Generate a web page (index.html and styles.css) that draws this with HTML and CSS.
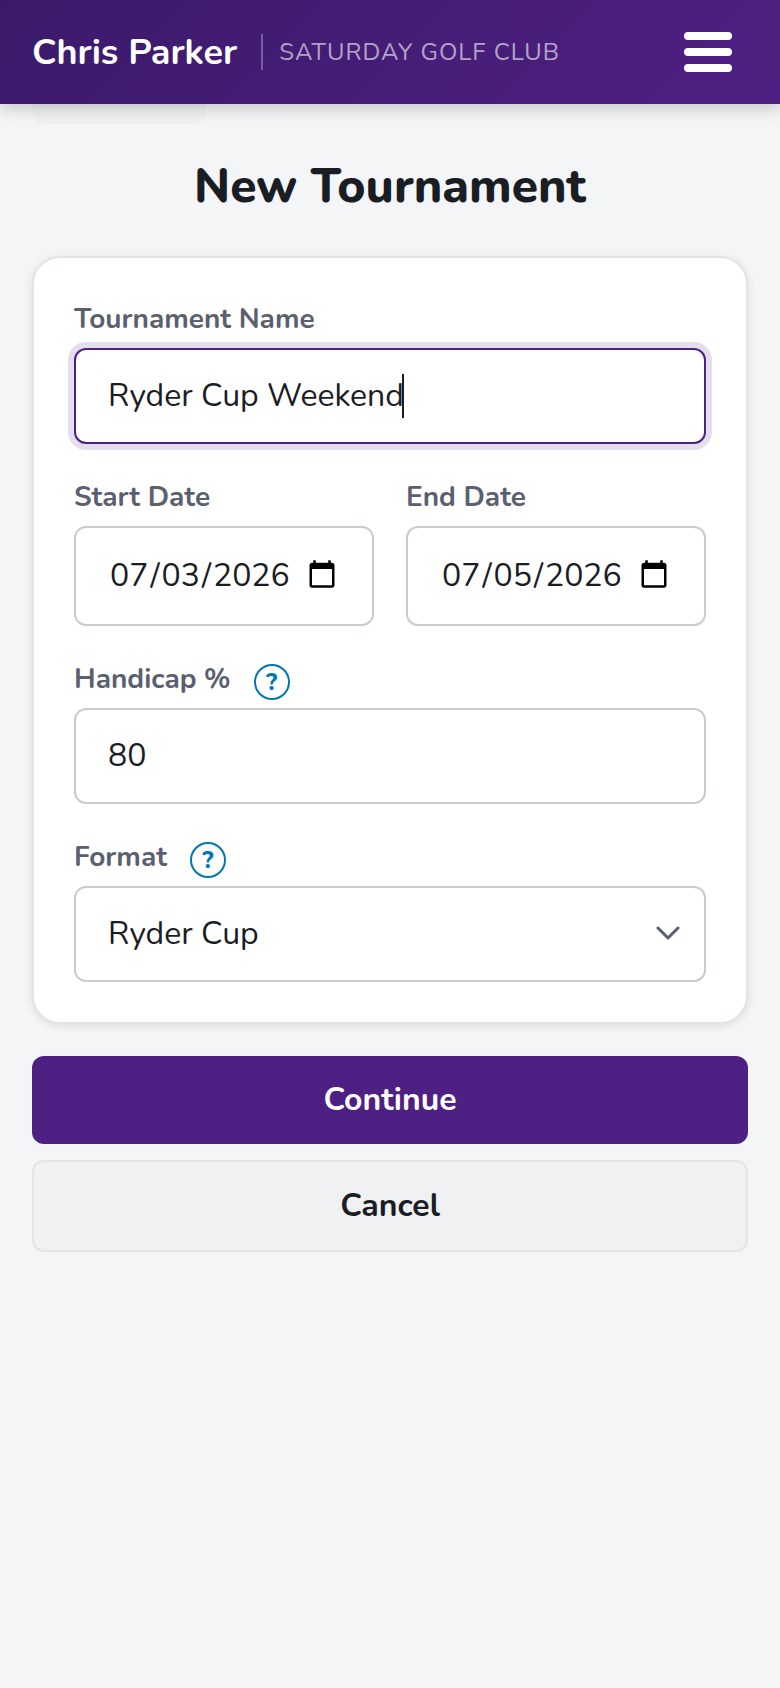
FILE: index.html
```html
<!DOCTYPE html>
<html lang="en">
<head>
  <meta charset="UTF-8">
  <meta name="viewport" content="width=device-width, initial-scale=1">
  <title>New Tournament</title>
  <link rel="stylesheet" href="styles.css">
</head>
<body>
  <header class="topbar">
    <div class="brand">
      <span class="brand-name">Chris Parker</span>
      <span class="brand-club">SATURDAY GOLF CLUB</span>
    </div>
    <button class="menu-btn" type="button" aria-label="Menu">
      <span></span>
      <span></span>
      <span></span>
    </button>
  </header>

  <main class="page">
    <div class="back-tab"></div>
    <h1>New Tournament</h1>

    <form>
      <div class="card">
        <div class="field">
          <div class="label-row"><label for="name">Tournament Name</label></div>
          <div class="focus-wrap">
            <input class="control active" type="text" id="name" value="Ryder Cup Weekend">
            <span class="caret"></span>
          </div>
        </div>

        <div class="field-pair">
          <div class="field">
            <div class="label-row"><label for="start">Start Date</label></div>
            <input class="control date" type="date" id="start" value="2026-07-03">
          </div>
          <div class="field">
            <div class="label-row"><label for="end">End Date</label></div>
            <input class="control date" type="date" id="end" value="2026-07-05">
          </div>
        </div>

        <div class="field">
          <div class="label-row">
            <label for="handicap">Handicap %</label>
            <button class="help" type="button" aria-label="About handicap">?</button>
          </div>
          <input class="control" type="text" inputmode="numeric" id="handicap" value="80">
        </div>

        <div class="field">
          <div class="label-row">
            <label for="format">Format</label>
            <button class="help" type="button" aria-label="About format">?</button>
          </div>
          <div class="select-wrap">
            <select class="control" id="format">
              <option>Ryder Cup</option>
            </select>
            <svg class="chevron" width="24" height="16" viewBox="0 0 24 16" aria-hidden="true">
              <path d="M2 2 L12 12 L22 2" fill="none" stroke="currentColor" stroke-width="3" stroke-linecap="round" stroke-linejoin="round"/>
            </svg>
          </div>
        </div>
      </div>

      <div class="actions">
        <button class="btn btn-primary" type="submit">Continue</button>
        <button class="btn btn-secondary" type="button">Cancel</button>
      </div>
    </form>
  </main>
</body>
</html>
```
FILE: styles.css
```css
* {
  box-sizing: border-box;
}
body {
  margin: 0;
  min-height: 100vh;
  background: #f3f5f7;
  color: #1a1d24;
  font-family: Nunito, Lato, sans-serif;
  font-size: 32px;
}
button, input, select {
  font: inherit;
  color: inherit;
}

/* Header */
.topbar {
  position: sticky;
  top: 0;
  z-index: 10;
  display: flex;
  align-items: center;
  justify-content: space-between;
  height: 104px;
  padding: 0 32px;
  background: linear-gradient(135deg, #3b1a6b, #4f2083);
  box-shadow: 0 4px 16px rgba(0, 0, 0, 0.2);
}
.brand {
  display: flex;
  align-items: center;
  gap: 24px;
  color: #fff;
}
.brand-name {
  font-size: 36px;
  font-weight: 700;
}
.brand-club {
  padding-left: 16px;
  border-left: 2px solid rgba(255, 255, 255, 0.3);
  color: rgba(255, 255, 255, 0.6);
  font-size: 24px;
  line-height: 36px;
  letter-spacing: 1px;
}
.menu-btn {
  display: flex;
  flex-direction: column;
  gap: 8px;
  padding: 16px;
  border: none;
  background: none;
}
.menu-btn span {
  width: 48px;
  height: 8px;
  border-radius: 4px;
  background: #fff;
}

/* Page */
.page {
  padding: 0 32px 32px;
}
.back-tab {
  width: 174px;
  height: 20px;
  border-radius: 0 0 12px 12px;
  background: #eff0f2;
}
h1 {
  margin: 28px 0 36px;
  font-size: 48px;
  line-height: 68px;
  font-weight: 800;
  text-align: center;
}
.card {
  display: flex;
  flex-direction: column;
  gap: 32px;
  padding: 40px;
  border: 2px solid #e2e4e9;
  border-radius: 28px;
  background: #fff;
  box-shadow: 0 2px 8px rgba(0, 0, 0, 0.1);
}
.field-pair {
  display: grid;
  grid-template-columns: repeat(2, minmax(0, 1fr));
  gap: 32px;
}
.label-row {
  display: flex;
  align-items: flex-end;
  gap: 23px;
  height: 42px;
  margin-bottom: 8px;
}
.label-row label {
  color: #5a6070;
  font-size: 28px;
  line-height: 42px;
  font-weight: 700;
}
.help {
  width: 36px;
  height: 36px;
  padding: 0;
  border: 2px solid #0077b6;
  border-radius: 50%;
  background: none;
  color: #0077b6;
  font-size: 24px;
  line-height: 32px;
  font-weight: 800;
}

/* Controls */
.control {
  display: block;
  width: 100%;
  height: 96px;
  padding: 0 32px 2px;
  border: 2px solid #c8ccd2;
  border-radius: 12px;
  outline: none;
  background: #fff;
  appearance: none;
}
.control.date {
  height: 100px;
}
.date::-webkit-datetime-edit-month-field,
.date::-webkit-datetime-edit-day-field,
.date::-webkit-datetime-edit-year-field {
  padding: 0 2px;
}
.date::-webkit-calendar-picker-indicator {
  margin-left: 12px;
}
.control.active {
  border-color: #4f2083;
  box-shadow: 0 0 0 6px #e5deed;
}
.focus-wrap, .select-wrap {
  position: relative;
}
.caret {
  position: absolute;
  top: 26px;
  left: 328px;
  width: 2px;
  height: 44px;
  background: #1a1d24;
}
.chevron {
  position: absolute;
  top: 40px;
  right: 26px;
  color: #5a6070;
  pointer-events: none;
}

/* Buttons */
.actions {
  display: flex;
  flex-direction: column;
  gap: 16px;
  margin-top: 32px;
}
.btn {
  height: 88px;
  padding: 0 32px 2px;
  border: none;
  border-radius: 12px;
  font-weight: 700;
}
.btn-primary {
  background: #4f2083;
  color: #fff;
}
.btn-secondary {
  height: 92px;
  border: 2px solid #e2e4e6;
  background: #eff1f3;
}
```
